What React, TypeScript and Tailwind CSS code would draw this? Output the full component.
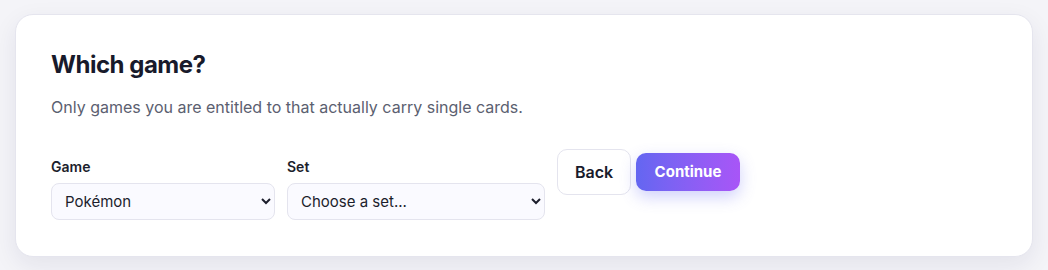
import React from 'react';

const font = { fontFamily: 'Inter, "Noto Sans", sans-serif' };

export default function App() {
  return (
    <div className="min-h-[270px] w-full bg-[#f4f4f8] px-[15px] pt-[14px] pb-[14px]" style={font}>
      <div className="rounded-[18px] border border-[#e5e5ee] bg-white px-[35px] pt-[36px] pb-[36px] shadow-[0_8px_24px_rgba(30,30,80,0.08)]">
        <h2 className="text-[24px] leading-[28px] font-bold tracking-[-0.02em] text-[#181a2b]">Which game?</h2>
        <p className="mt-4 text-[16px] leading-6 text-[#5b6070]">
          Only games you are entitled to that actually carry single cards.
        </p>

        <div className="mt-[30px] flex items-start gap-3">
          <label className="flex w-[224px] flex-col gap-[6px] pt-[8px]">
            <span className="text-[14px] leading-5 font-semibold text-[#1c1e2c]">Game</span>
            <select
              defaultValue="pokemon"
              className="h-[37px] rounded-[8px] border border-[#e4e4ee] bg-[#fafaff] pl-[9px] pr-1 text-[15px] text-[#1c1e2c] outline-none"
            >
              <option value="pokemon">Pokémon</option>
              <option value="mtg">Magic: The Gathering</option>
            </select>
          </label>

          <label className="flex w-[258px] flex-col gap-[6px] pt-[8px]">
            <span className="text-[14px] leading-5 font-semibold text-[#1c1e2c]">Set</span>
            <select
              defaultValue=""
              className="h-[37px] rounded-[8px] border border-[#e4e4ee] bg-[#fafaff] pl-[9px] pr-1 text-[15px] text-[#1c1e2c] outline-none"
            >
              <option value="">Choose a set...</option>
            </select>
          </label>

          <div className="flex items-center gap-[5px]">
            <button className="h-[46px] w-[74px] rounded-[10px] border border-[#e4e4ee] bg-white text-[16px] font-semibold text-[#181a2b]">
              Back
            </button>
            <button className="h-[38px] w-[104px] rounded-[10px] bg-gradient-to-r from-[#6366f1] to-[#a855f7] text-[15px] font-bold text-white shadow-[0_6px_16px_rgba(99,102,241,0.3)]">
              Continue
            </button>
          </div>
        </div>
      </div>
    </div>
  );
}
